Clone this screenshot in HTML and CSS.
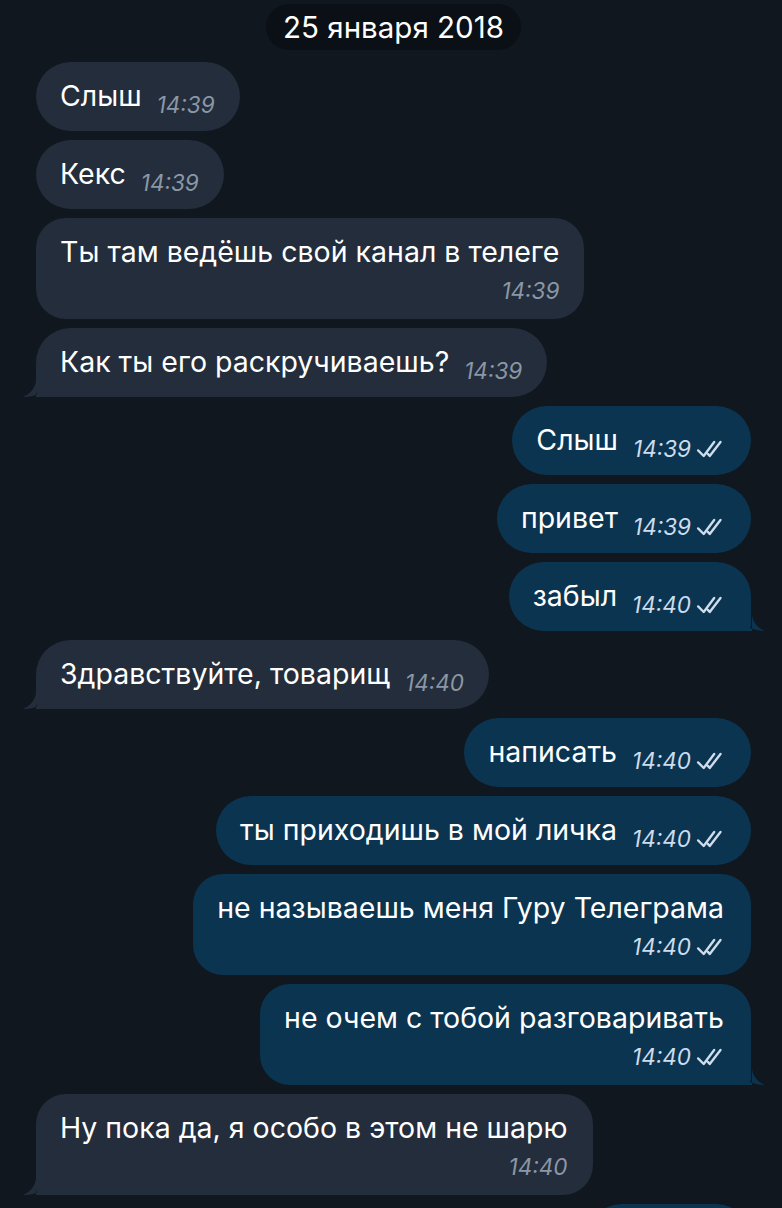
FILE: index.html
```html
<!DOCTYPE html>
<html lang="ru">
<head>
    <meta charset="UTF-8">
    <meta name="viewport" content="width=device-width, initial-scale=1.0">
    <title>Чат</title>
    <link rel="stylesheet" href="styles.css">
</head>
<body>
    <div class="chat">
        <div class="fecha"><span>25 января 2018</span></div>

        <div class="fila entrante">
            <div class="burbuja"><span class="texto">Слыш</span><span class="hora">14:39</span></div>
        </div>
        <div class="fila entrante">
            <div class="burbuja"><span class="texto">Кекс</span><span class="hora">14:39</span></div>
        </div>
        <div class="fila entrante">
            <div class="burbuja dos"><span class="texto">Ты там ведёшь свой канал в телеге</span><span class="hora">14:39</span></div>
        </div>
        <div class="fila entrante">
            <div class="burbuja cola"><span class="texto">Как ты его раскручиваешь?</span><span class="hora">14:39</span>
                <svg class="pico" viewBox="0 0 20 40"><path d="M13 0 V22 C13 31 7 37 0 40 C8 40 15 38 20 34 V40 H13 Z"/></svg>
            </div>
        </div>

        <div class="fila saliente">
            <div class="burbuja"><span class="texto">Слыш</span><span class="hora">14:39 <svg class="check" viewBox="0 0 20 14"><path d="M1.5 8 L5.5 12 L13 2 M8.5 10.5 L9.8 12 L17.5 2"/></svg></span></div>
        </div>
        <div class="fila saliente">
            <div class="burbuja"><span class="texto">привет</span><span class="hora">14:39 <svg class="check" viewBox="0 0 20 14"><path d="M1.5 8 L5.5 12 L13 2 M8.5 10.5 L9.8 12 L17.5 2"/></svg></span></div>
        </div>
        <div class="fila saliente">
            <div class="burbuja cola"><span class="texto">забыл</span><span class="hora">14:40 <svg class="check" viewBox="0 0 20 14"><path d="M1.5 8 L5.5 12 L13 2 M8.5 10.5 L9.8 12 L17.5 2"/></svg></span>
                <svg class="pico" viewBox="0 0 20 40"><path d="M7 0 V22 C7 31 13 37 20 40 C12 40 5 38 0 34 V40 H7 Z"/></svg>
            </div>
        </div>

        <div class="fila entrante">
            <div class="burbuja cola"><span class="texto">Здравствуйте, товарищ</span><span class="hora">14:40</span>
                <svg class="pico" viewBox="0 0 20 40"><path d="M13 0 V22 C13 31 7 37 0 40 C8 40 15 38 20 34 V40 H13 Z"/></svg>
            </div>
        </div>

        <div class="fila saliente">
            <div class="burbuja"><span class="texto">написать</span><span class="hora">14:40 <svg class="check" viewBox="0 0 20 14"><path d="M1.5 8 L5.5 12 L13 2 M8.5 10.5 L9.8 12 L17.5 2"/></svg></span></div>
        </div>
        <div class="fila saliente">
            <div class="burbuja"><span class="texto">ты приходишь в мой личка</span><span class="hora">14:40 <svg class="check" viewBox="0 0 20 14"><path d="M1.5 8 L5.5 12 L13 2 M8.5 10.5 L9.8 12 L17.5 2"/></svg></span></div>
        </div>
        <div class="fila saliente">
            <div class="burbuja dos"><span class="texto">не называешь меня Гуру Телеграма</span><span class="hora">14:40 <svg class="check" viewBox="0 0 20 14"><path d="M1.5 8 L5.5 12 L13 2 M8.5 10.5 L9.8 12 L17.5 2"/></svg></span></div>
        </div>
        <div class="fila saliente">
            <div class="burbuja dos cola"><span class="texto">не очем с тобой разговаривать</span><span class="hora">14:40 <svg class="check" viewBox="0 0 20 14"><path d="M1.5 8 L5.5 12 L13 2 M8.5 10.5 L9.8 12 L17.5 2"/></svg></span>
                <svg class="pico" viewBox="0 0 20 40"><path d="M7 0 V22 C7 31 13 37 20 40 C12 40 5 38 0 34 V40 H7 Z"/></svg>
            </div>
        </div>

        <div class="fila entrante">
            <div class="burbuja dos cola"><span class="texto">Ну пока да, я особо в этом не шарю</span><span class="hora">14:40</span>
                <svg class="pico" viewBox="0 0 20 40"><path d="M13 0 V22 C13 31 7 37 0 40 C8 40 15 38 20 34 V40 H13 Z"/></svg>
            </div>
        </div>

        <!-- siguiente mensaje, cortado por el borde -->
        <div class="fila saliente">
            <div class="burbuja vacia"></div>
        </div>
    </div>
</body>
</html>
```

FILE: styles.css
```css
body {
    margin: 0;
    background-color: #10171e;
    font-family: Inter, "Liberation Sans", sans-serif;
    color: #fff;
    overflow: hidden;
}

.chat {
    display: flex;
    flex-direction: column;
    gap: 9px;
    padding: 4px 31px 0 36px;
}

/* Fecha arriba */
.fecha {
    display: flex;
    justify-content: center;
    margin-bottom: 3px;
}

.fecha span {
    background-color: #0a1015;
    border-radius: 23px;
    padding: 0 17px;
    height: 46px;
    line-height: 46px;
    font-size: 29.5px;
}

.fila {
    display: flex;
}

.entrante {
    justify-content: flex-start;
}

.saliente {
    justify-content: flex-end;
}

.burbuja {
    position: relative;
    display: flex;
    align-items: flex-end;
    gap: 15px;
    padding: 18px 25px 19px 24px;
    border-radius: 35px;
    background-color: #232d3b;
}

.saliente .burbuja {
    background-color: #0b3450;
    padding-right: 27px;
}

.burbuja.vacia {
    width: 113px;
    height: 32px;
}

.texto {
    font-size: 28.5px;
    line-height: 32px;
    white-space: nowrap;
}

.hora {
    display: flex;
    align-items: center;
    gap: 5px;
    font-size: 22.5px;
    font-style: italic;
    line-height: 24px;
    margin-bottom: -5px;
    color: #8b97a6;
    white-space: nowrap;
}

.saliente .hora {
    color: #cfdcea;
}

/* Burbuja con dos filas: hora abajo a la derecha */
.burbuja.dos {
    flex-direction: column;
    align-items: stretch;
    gap: 0;
    padding-bottom: 16px;
    border-radius: 30px;
}

.burbuja.dos .hora {
    align-self: flex-end;
    margin: 11px 0 0 0;
}

.check {
    width: 28px;
    height: 20px;
    fill: none;
    stroke: currentColor;
    stroke-width: 1.7;
    stroke-linecap: round;
    stroke-linejoin: round;
}

/* Colitas */
.entrante .cola {
    border-bottom-left-radius: 6px;
}

.saliente .cola {
    border-bottom-right-radius: 6px;
}

.pico {
    position: absolute;
    bottom: 0;
    width: 20px;
    height: 40px;
}

.entrante .pico {
    left: -13px;
    fill: #232d3b;
}

.saliente .pico {
    right: -14px;
    fill: #0b3450;
}
```
